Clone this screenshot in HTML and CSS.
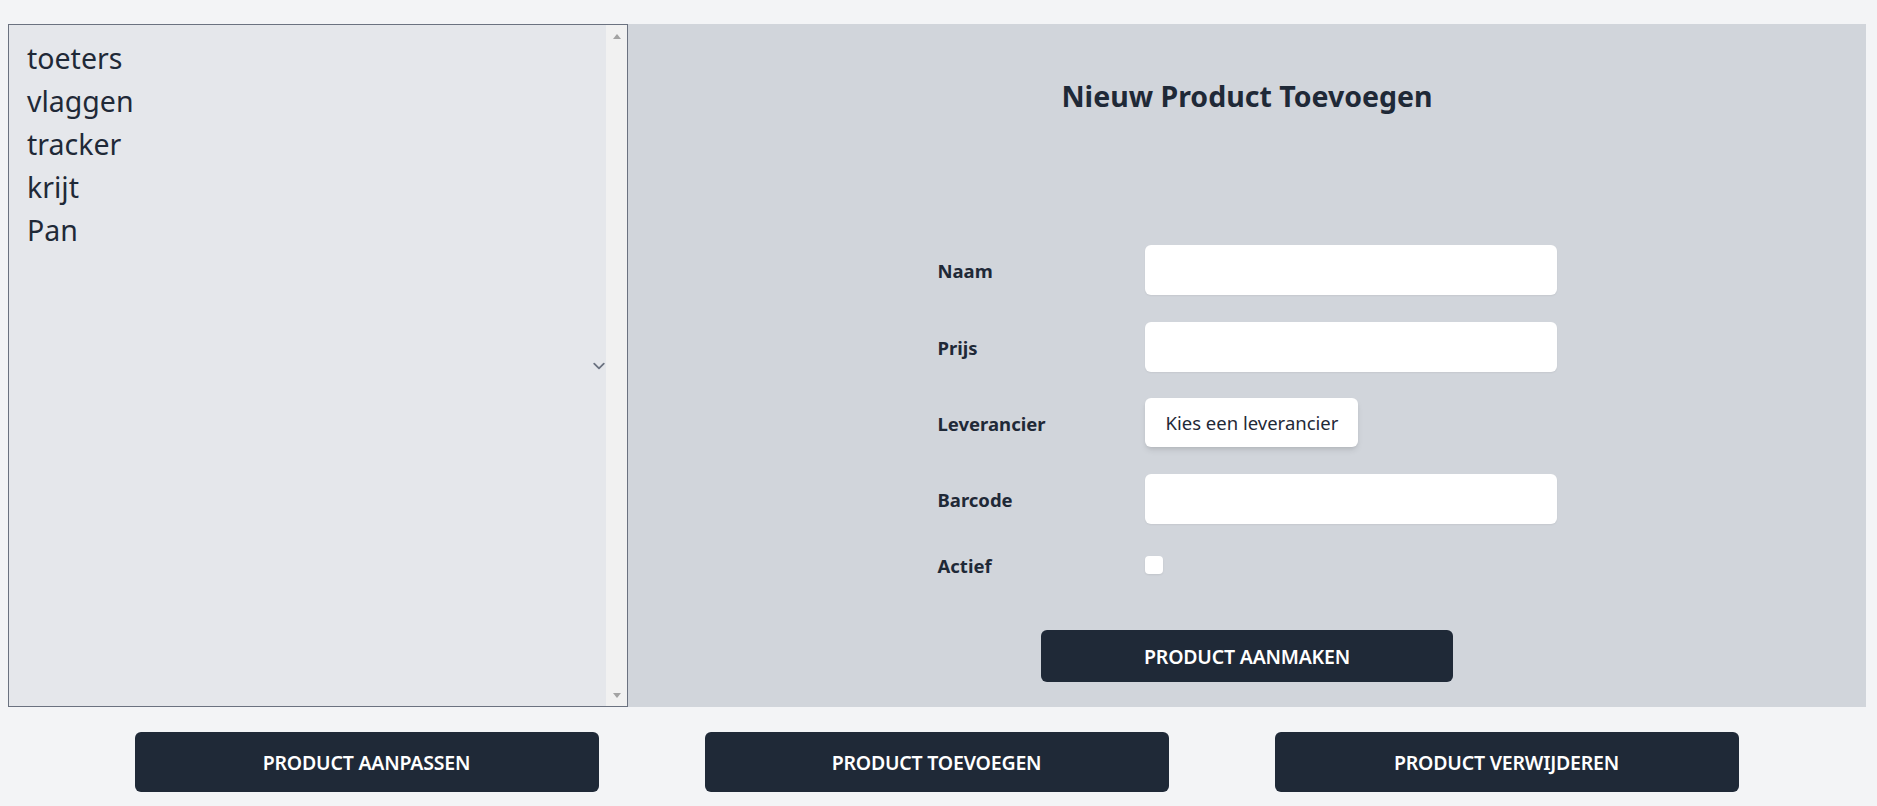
FILE: index.html
```html
<!DOCTYPE html>
<html lang="nl">
<head>
<meta charset="utf-8">
<title>Producten</title>
<link rel="stylesheet" href="styles.css">
</head>
<body>
<main class="page">
  <div class="top">
    <div class="listbox">
      <ul class="options">
        <li>toeters</li>
        <li>vlaggen</li>
        <li>tracker</li>
        <li>krijt</li>
        <li>Pan</li>
      </ul>
      <svg class="chevron" width="24" height="24" viewBox="0 0 20 20" fill="none"><path d="M6 8l4 4 4-4" stroke="#6b7280" stroke-width="1.5" stroke-linecap="round" stroke-linejoin="round"/></svg>
      <div class="scrollbar">
        <span class="arrow up"></span>
        <span class="arrow down"></span>
      </div>
    </div>
    <section class="panel">
      <h2 class="title">Nieuw Product Toevoegen</h2>
      <form class="form">
        <label class="label" for="naam">Naam</label>
        <input class="input" id="naam" type="text">
        <label class="label" for="prijs">Prijs</label>
        <input class="input" id="prijs" type="text">
        <label class="label">Leverancier</label>
        <div><button type="button" class="choose">Kies een leverancier</button></div>
        <label class="label" for="barcode">Barcode</label>
        <input class="input" id="barcode" type="text">
        <label class="label" for="actief">Actief</label>
        <div class="check-wrap"><span class="checkbox"></span></div>
      </form>
      <button type="button" class="btn btn-create">PRODUCT AANMAKEN</button>
    </section>
  </div>
  <div class="actions">
    <button type="button" class="btn btn-big">PRODUCT AANPASSEN</button>
    <button type="button" class="btn btn-big">PRODUCT TOEVOEGEN</button>
    <button type="button" class="btn btn-big">PRODUCT VERWIJDEREN</button>
  </div>
</main>
</body>
</html>
```
FILE: styles.css
```css
* { box-sizing: border-box; }
html, body { margin: 0; padding: 0; }
body {
  background: #f3f4f6;
  font-family: "Noto Sans", "Open Sans", sans-serif;
  color: #1f2937;
}
.page {
  padding: 24px 8px 0 8px;
}
.top {
  display: grid;
  grid-template-columns: 620px 1fr;
}
.listbox {
  position: relative;
  display: flex;
  border: 1px solid #6b7280;
  background: #e5e7eb;
}
.options {
  list-style: none;
  margin: 0;
  padding: 12px 0 0 18px;
  flex: 1;
  font-size: 28.5px;
  line-height: 43px;
  color: #1f2937;
}
.chevron {
  position: absolute;
  right: 16px;
  top: 50%;
  margin-top: -12px;
}
.scrollbar {
  position: relative;
  z-index: 1;
  width: 21px;
  background: #f1f1f1;
  display: flex;
  flex-direction: column;
  justify-content: space-between;
  align-items: center;
  padding: 9px 0 8px;
}
.arrow {
  width: 0; height: 0;
  border-left: 4.5px solid transparent;
  border-right: 4.5px solid transparent;
}
.arrow.up { border-bottom: 5px solid #a3a3a3; }
.arrow.down { border-top: 5px solid #a3a3a3; }
.panel {
  background: #d1d5db;
  display: flex;
  flex-direction: column;
  align-items: center;
  padding: 54px 0 25px;
  margin-right: 3px;
}
.title {
  margin: 0;
  font-size: 28.5px;
  line-height: 36px;
  font-weight: 700;
  color: #1f2937;
}
.form {
  margin-top: 131px;
  display: grid;
  grid-template-columns: 207px 412px;
  row-gap: 26.5px;
  align-items: center;
}
.label {
  padding-top: 2px;
  font-size: 18.5px;
  line-height: 28px;
  font-weight: 700;
  color: #1f2937;
}
.input {
  height: 50px;
  width: 412px;
  border: 0;
  border-radius: 6px;
  background: #fff;
  box-shadow: 0 1px 2px rgba(0,0,0,0.06);
  font: inherit;
}
.choose {
  height: 49px;
  padding: 0 20px 0 21px;
  border: 0;
  border-radius: 6px;
  background: #fff;
  box-shadow: 0 4px 6px -1px rgba(0,0,0,0.1), 0 2px 4px -2px rgba(0,0,0,0.1);
  font-family: inherit;
  font-size: 18.5px;
  color: #1f2937;
}
.check-wrap { height: 28px; display: flex; align-items: center; }
.checkbox {
  display: block;
  width: 18px; height: 18px;
  background: #fff;
  border-radius: 4px;
  box-shadow: 0 1px 2px rgba(0,0,0,0.08);
}
.btn {
  border: 0;
  background: #1f2937;
  color: #fff;
  font-family: inherit;
  font-weight: 600;
  font-size: 19.5px;
  border-radius: 6px;
  letter-spacing: -0.2px;
}
.btn-create {
  margin-top: 50px;
  width: 412px;
  height: 52px;
}
.actions {
  margin-top: 25px;
  padding-right: 4px;
  display: flex;
  justify-content: center;
  gap: 106px;
}
.btn-big {
  width: 464px;
  height: 60px;
}
```
